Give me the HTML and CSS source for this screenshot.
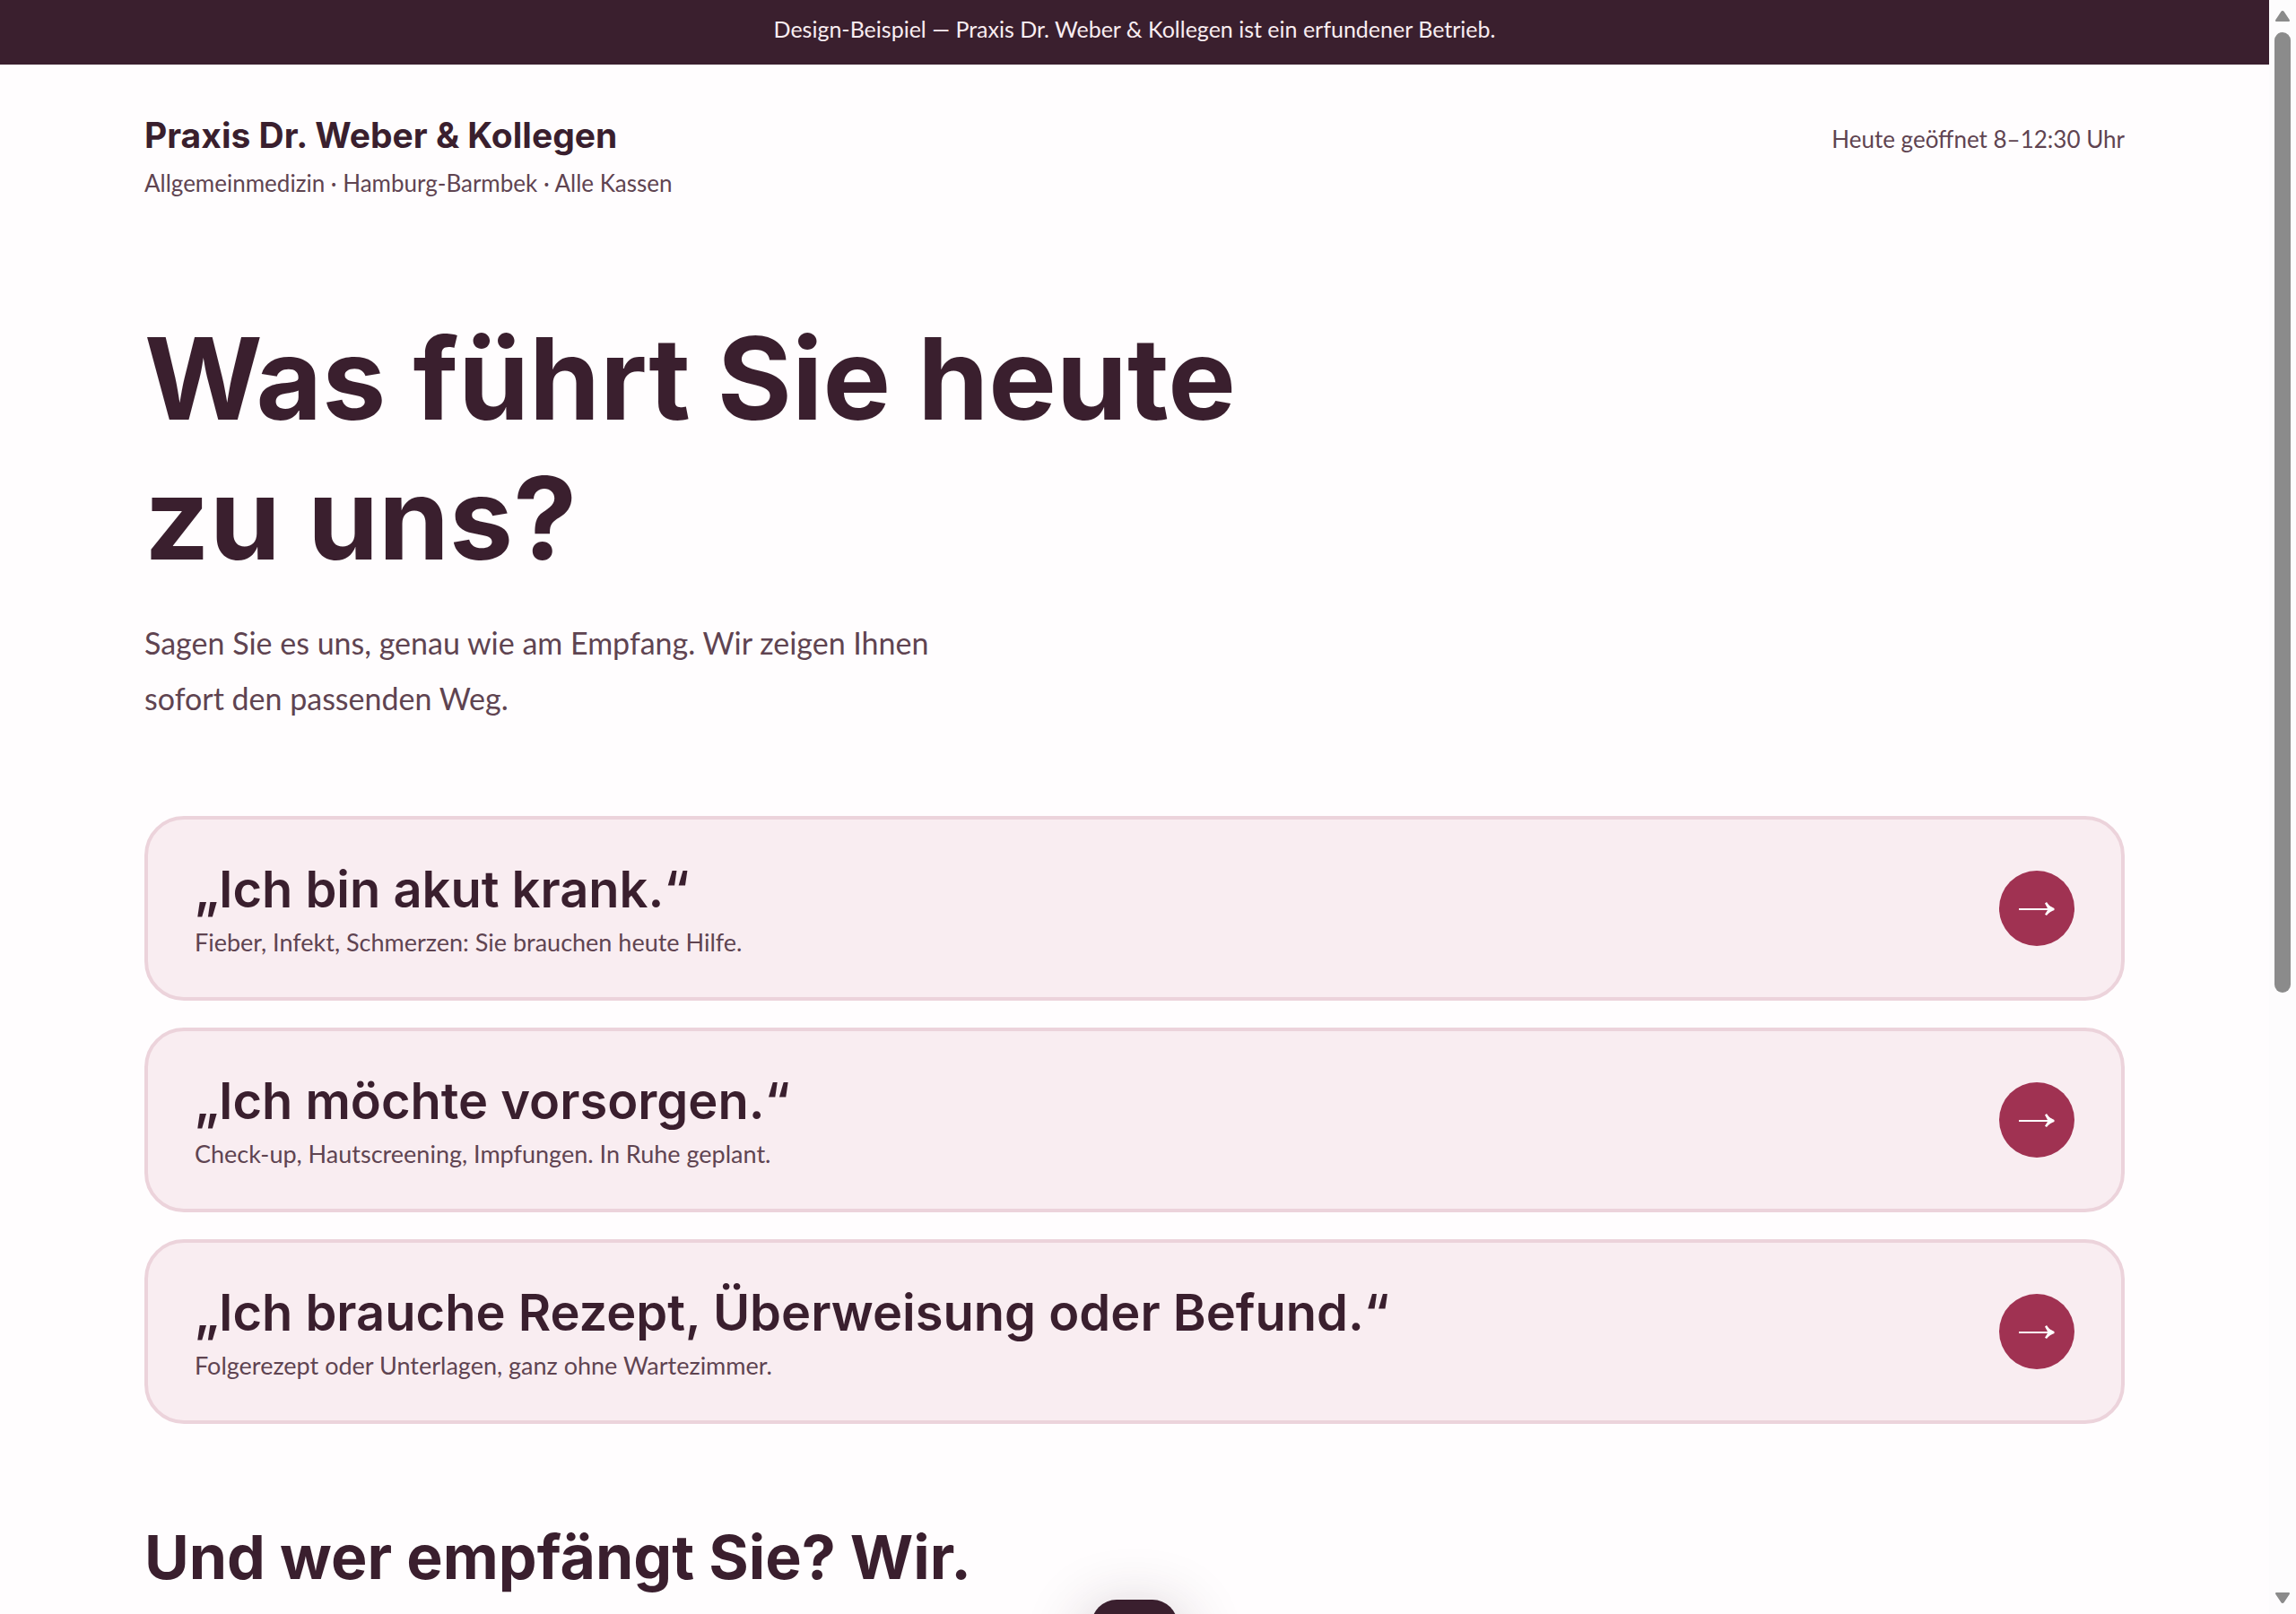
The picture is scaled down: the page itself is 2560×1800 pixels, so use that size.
FILE: index.html
```html
<!DOCTYPE html>
<html lang="de">
<head>
    <meta charset="utf-8">
    <meta name="viewport" content="width=device-width, initial-scale=1">
    <title>Praxis Dr. Weber &amp; Kollegen</title>
    <link rel="stylesheet" href="styles.css">
</head>
<body>
    <div class="page">
        <p class="notice">Design-Beispiel — Praxis Dr. Weber &amp; Kollegen ist ein erfundener Betrieb.</p>

        <div class="wrap">
            <header class="header">
                <div>
                    <a class="brand" href="#">Praxis Dr. Weber &amp; Kollegen</a>
                    <p class="tagline">Allgemeinmedizin · Hamburg-Barmbek · Alle Kassen</p>
                </div>
                <p class="hours">Heute geöffnet 8–12:30 Uhr</p>
            </header>

            <main>
                <h1>Was führt Sie heute<br>zu uns?</h1>
                <p class="lead">Sagen Sie es uns, genau wie am Empfang. Wir zeigen Ihnen<br>sofort den passenden Weg.</p>

                <nav class="cards">
                    <a class="card" href="#akut">
                        <span class="card-text">
                            <span class="card-title">„Ich bin akut krank.“</span>
                            <span class="card-sub">Fieber, Infekt, Schmerzen: Sie brauchen heute Hilfe.</span>
                        </span>
                        <span class="card-arrow">
                            <svg viewBox="0 0 40 16" aria-hidden="true"><path d="M0 8h32L29 2.600 31 1c2 3.400 4.800 5.600 8.500 7v2c-3.700 1.200-6.500 3.200-8.500 6l-2-1.200L32 10H0z"/></svg>
                        </span>
                    </a>
                    <a class="card" href="#vorsorge">
                        <span class="card-text">
                            <span class="card-title">„Ich möchte vorsorgen.“</span>
                            <span class="card-sub">Check-up, Hautscreening, Impfungen. In Ruhe geplant.</span>
                        </span>
                        <span class="card-arrow">
                            <svg viewBox="0 0 40 16" aria-hidden="true"><path d="M0 8h32L29 2.600 31 1c2 3.400 4.800 5.600 8.500 7v2c-3.700 1.200-6.500 3.200-8.500 6l-2-1.200L32 10H0z"/></svg>
                        </span>
                    </a>
                    <a class="card" href="#rezept">
                        <span class="card-text">
                            <span class="card-title">„Ich brauche Rezept, Überweisung oder Befund.“</span>
                            <span class="card-sub">Folgerezept oder Unterlagen, ganz ohne Wartezimmer.</span>
                        </span>
                        <span class="card-arrow">
                            <svg viewBox="0 0 40 16" aria-hidden="true"><path d="M0 8h32L29 2.600 31 1c2 3.400 4.800 5.600 8.500 7v2c-3.700 1.200-6.500 3.200-8.500 6l-2-1.200L32 10H0z"/></svg>
                        </span>
                    </a>
                </nav>

                <h2>Und wer empfängt Sie? Wir.</h2>
            </main>
        </div>

        <button class="dock" type="button" aria-label="Menü"></button>
    </div>

    <div class="scrollbar" aria-hidden="true">
        <svg class="scroll-btn" viewBox="0 0 16 12"><path d="M8 0c.8 0 1.300.3 1.700 1l6 9c.6 1 .2 2-1 2H1.300c-1.200 0-1.600-1-1-2l6-9C6.700.3 7.200 0 8 0z"/></svg>
        <div class="scroll-track">
            <div class="scroll-thumb"></div>
        </div>
        <svg class="scroll-btn" viewBox="0 0 16 12"><path d="M8 12c.8 0 1.300-.3 1.700-1l6-9c.6-1 .2-2-1-2H1.300C.1 0-.3 1 .3 2l6 9c.4.7.9 1 1.700 1z"/></svg>
    </div>
</body>
</html>
```

FILE: styles.css
```css
:root {
    --ink: #3a1f2e;
    --muted: #5f4451;
    --paper: #fffdfe;
    --rose: #f9edf1;
    --line: #ecd3db;
    --accent: #a03252;
    --display: Inter, "Liberation Sans", sans-serif;
    --text: Lato, "Open Sans", sans-serif;
}

* {
    box-sizing: border-box;
}

body {
    display: flex;
    height: 100vh;
    margin: 0;
    overflow: hidden;
    background: var(--paper);
    color: var(--ink);
    font-family: var(--text);
    font-size: 26px;
}

h1, h2, p {
    margin: 0;
}

a {
    color: inherit;
    text-decoration: none;
}

.page {
    position: relative;
    flex: 1;
    overflow: hidden;
}

.notice {
    padding: 12px 40px 20px;
    background: var(--ink);
    color: #f9edf1;
    font-size: 25px;
    line-height: 40px;
    text-align: center;
}

.wrap {
    padding: 0 161px;
}

/* header */
.header {
    display: flex;
    justify-content: space-between;
    align-items: baseline;
    padding-top: 50px;
}

.brand {
    display: block;
    font-family: var(--display);
    font-size: 39px;
    font-weight: 700;
    line-height: 58px;
}

.tagline,
.hours {
    color: var(--muted);
    line-height: 48px;
}

/* intro */
h1 {
    margin-top: 116px;
    font-family: var(--display);
    font-size: 127px;
    font-weight: 700;
    line-height: 156px;
}

.lead {
    margin-top: 30px;
    color: var(--muted);
    font-size: 34px;
    line-height: 62px;
}

/* cards */
.cards {
    display: flex;
    flex-direction: column;
    gap: 30px;
    margin-top: 100px;
}

.card {
    display: flex;
    justify-content: space-between;
    align-items: center;
    padding: 40px 52px;
    border: 4px solid var(--line);
    border-radius: 44px;
    background: var(--rose);
}

.card-text {
    display: flex;
    flex-direction: column;
}

.card-title {
    font-family: var(--display);
    font-size: 56px;
    font-weight: 600;
    line-height: 76px;
}

.card-sub {
    color: var(--muted);
    font-size: 27px;
    line-height: 42px;
}

.card-arrow {
    display: flex;
    justify-content: center;
    align-items: center;
    width: 84px;
    height: 84px;
    border-radius: 50%;
    background: var(--accent);
}

.card-arrow svg {
    width: 40px;
    fill: #fff;
}

h2 {
    margin-top: 104px;
    font-family: var(--display);
    font-size: 68px;
    font-weight: 700;
    line-height: 88px;
}

/* floating button at the lower edge */
.dock {
    position: absolute;
    bottom: -80px;
    left: 50%;
    width: 96px;
    height: 96px;
    margin-left: -48px;
    border: 0;
    border-radius: 28px;
    background: var(--ink);
    box-shadow: 0 16px 72px rgba(58, 31, 46, .3);
}

/* scrollbar */
.scrollbar {
    display: flex;
    flex-direction: column;
    align-items: center;
    gap: 12px;
    width: 30px;
    padding: 12px 0;
    background: #fdfcfd;
}

.scroll-btn {
    width: 16px;
    height: 12px;
    fill: #8b8b8b;
}

.scroll-track {
    flex: 1;
    width: 18px;
}

.scroll-thumb {
    height: 62%;
    border-radius: 9px;
    background: #8b8b8b;
}
```
